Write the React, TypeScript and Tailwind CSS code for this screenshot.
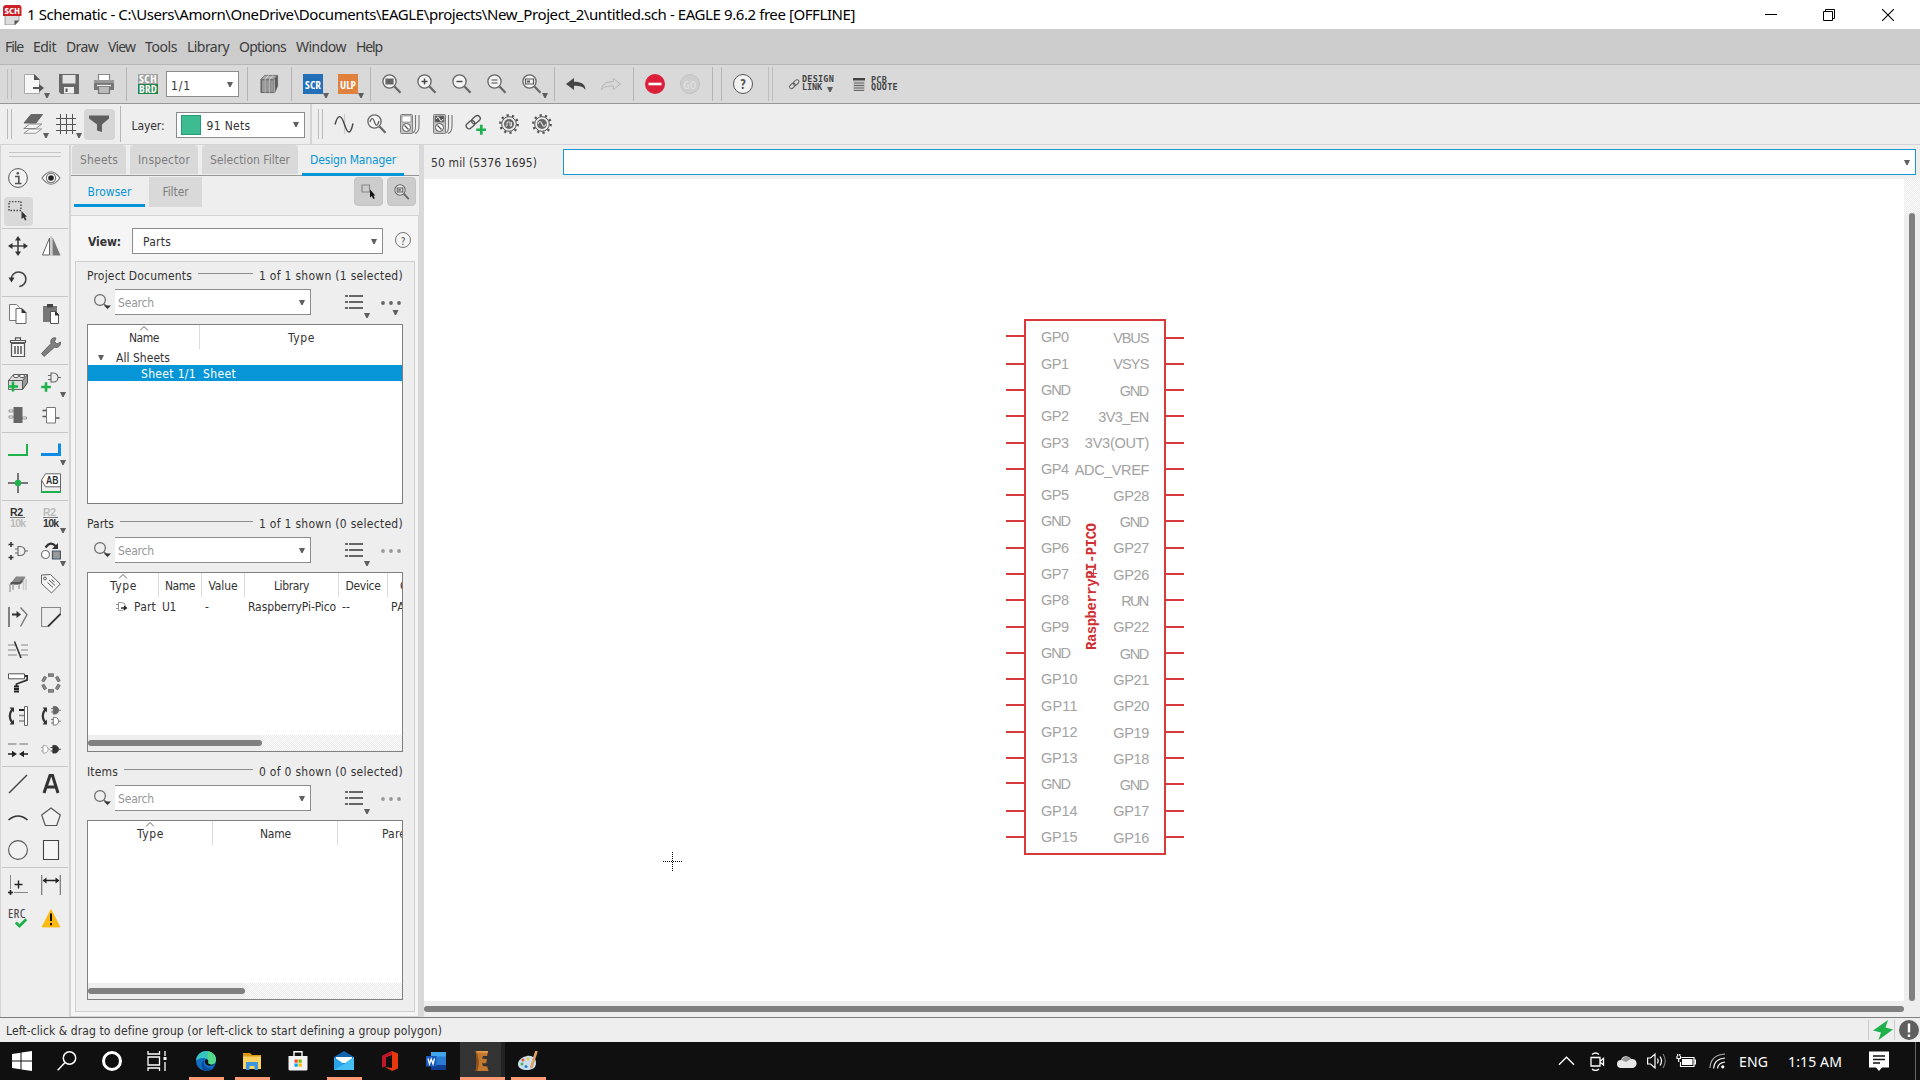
import React, { useLayoutEffect, useRef } from "react";

type Kids = { children?: React.ReactNode };

/* Text run whose tracking is tuned so that it fills a known width. */
function T({ w, className = "", children }: { w: number; className?: string; children: string }) {
  const ref = useRef<HTMLSpanElement>(null);
  useLayoutEffect(() => {
    const el = ref.current;
    if (!el) return;
    el.style.letterSpacing = "0px";
    const natural = el.offsetWidth ? el.getBoundingClientRect().width : w;
    el.style.letterSpacing = `${(w - natural) / children.length}px`;
  }, [w, children]);
  return (
    <span ref={ref} className={`inline-block shrink-0 whitespace-pre ${className}`}>
      {children}
    </span>
  );
}

function I({ children, className = "size-5" }: Kids & { className?: string }) {
  return (
    <svg viewBox="0 0 20 20" className={`shrink-0 ${className}`} fill="none" stroke="#555" strokeWidth="1.2">
      {children}
    </svg>
  );
}

function Tri({ className = "" }: { className?: string }) {
  return (
    <svg viewBox="0 0 6 5" className={`h-[5px] w-1.5 shrink-0 ${className}`}>
      <path d="M0 0h6L3.600 5H2.400z" fill="#5f5f5f" />
    </svg>
  );
}

/* ---------- icon drawings ---------- */
const Lens = ({ children }: Kids) => (
  <I>
    <path d="M12.500 12.500L18.500 18.800" stroke="#666" strokeWidth="2.200" />
    <circle cx="7.500" cy="7.500" r="6.600" fill="#f4f4f4" stroke="#666" strokeWidth="1.300" />
    {children}
  </I>
);
const Plus = ({ x, y, s = 4.5 }: { x: number; y: number; s?: number }) => (
  <path d={`M${x - s} ${y}h${2 * s}M${x} ${y - s}v${2 * s}`} stroke="#1fb14c" strokeWidth="2.600" />
);
const Gate = ({ x = 0, y = 0, fill = "none", c = "#666" }: { x?: number; y?: number; fill?: string; c?: string }) => (
  <g transform={`translate(${x} ${y})`} stroke={c} strokeWidth="1.100">
    <path d="M3 0.500h2c4 0 5 3 5 4.500s-1 4.500-5 4.500H3z" fill={fill} />
    <path d="M0 3h3M0 7h3M10 5h3" />
  </g>
);
const Chain = () => (
  <g stroke="#555" strokeWidth="1.300" transform="rotate(-42 8 8)">
    <rect x="0" y="5" width="9" height="5.400" rx="2.700" />
    <rect x="7" y="5" width="9" height="5.400" rx="2.700" />
  </g>
);
const Gear = ({ children }: Kids) => (
  <I>
    <circle cx="10" cy="10" r="8.700" strokeWidth="2.400" strokeDasharray="2.200 3.266" stroke="#555" />
    <circle cx="10" cy="10" r="7.300" fill="#eee" strokeWidth="1" />
    <circle cx="10" cy="10" r="5" fill="#666" stroke="none" />
    {children}
  </I>
);
const Meter = ({ dark = false }: { dark?: boolean }) => (
  <I>
    <rect x="0.500" y="0.500" width="12" height="19" rx="1" fill="#c4c4c4" stroke="#808080" strokeWidth="1" />
    <rect x="2" y="2" width="9" height="6" fill={dark ? "#555" : "#fff"} stroke="#777" strokeWidth="0.600" />
    {dark && <path d="M3 5q2-4 3.500 0t3.500 0" stroke="#fff" strokeWidth="1" />}
    <circle cx="6.500" cy="13.500" r="4" fill="#fff" stroke="#555" strokeWidth="1" />
    <path d="M4.500 11.500l4 4" />
    <path d="M15.500 1v11q0 6-3 7M19 1v11q0 6-4 7.500" strokeWidth="1.100" stroke="#777" />
  </I>
);

const ic = {
  newDoc: (
    <I>
      <path d="M.5 .5h10l5 5V19.500H.5z" fill="#f6f6f6" stroke="#aaa" strokeWidth="1" />
      <path d="M10 0l6 6h-6z" fill="#555" stroke="none" />
      <path d="M9 14h7" stroke="#555" strokeWidth="2" />
      <path d="M15 10l5 4-5 4z" fill="#555" stroke="none" />
    </I>
  ),
  save: (
    <I>
      <path d="M0 0h20v20H2l-2-2z" fill="#676767" stroke="none" />
      <path d="M3.500 1h13v8.500h-13z" fill="#e4e4e4" stroke="none" />
      <path d="M5 13h10v6.500H5z" fill="#eee" stroke="none" />
      <path d="M6.500 14.500h2v3.500h-2z" fill="#555" stroke="none" />
    </I>
  ),
  print: (
    <I>
      <path d="M4.500 .5h11v7h-11z" fill="#fff" stroke="#888" />
      <path d="M0 6h20v10H0z" fill="#777" stroke="none" />
      <path d="M0 6h20v3H0z" fill="#999" stroke="none" />
      <path d="M4.500 12.500h11v7h-11z" fill="#bbb" stroke="#777" />
      <path d="M3 11.500h14" stroke="#eee" />
    </I>
  ),
  books: (
    <I className="h-5 w-[19px]">
      <path d="M1 5l4-4h13.500v11l-3 7H1z" fill="#5b5b5b" stroke="#666" strokeWidth="1" />
      <path d="M1 5l4-4h13l-3.500 4z" fill="#aaa" stroke="#777" strokeWidth=".6" />
      <path d="M2 6h3v12.500H2zM6.500 6h3v12.500h-3zM11 6h3v12.500h-3z" fill="#999" stroke="none" />
      <path d="M5.500 5v14M10.200 5v14M15 5v14M5.500 5L9 1M10.200 5l3.500-4" stroke="#eee" strokeWidth=".8" />
    </I>
  ),
  zoomFit: <Lens><path d="M4 5h7v5H4z" fill="#666" stroke="#666" /></Lens>,
  zoomIn: <Lens><path d="M4.500 7.500h6M7.500 4.500v6" stroke="#444" strokeWidth="1.400" /></Lens>,
  zoomOut: <Lens><path d="M4.500 7.500h6" stroke="#444" strokeWidth="1.400" /></Lens>,
  zoomRedraw: <Lens><path d="M4.500 6h6M4.500 9h6" stroke="#444" /></Lens>,
  zoomSelect: <Lens><path d="M3.500 5h8v5h-8z" stroke="#555" /><path d="M5 6.500h3v2H5z" fill="#555" stroke="none" /></Lens>,
  undo: (
    <I><path d="M0 10l8-6v3.700c7 0 11.500 2 11.500 8.300-2-3-5-4.300-11.500-4.300V16z" fill="#444" stroke="none" /></I>
  ),
  redo: (
    <I><path d="M19.300 10l-7-5.500v3.200C6 7.700 1 9.500.6 15.500c2.500-3 5.500-3.500 11.700-3.500v3.500z" stroke="#b4b4b4" strokeWidth="1" /></I>
  ),
  stop: (
    <I><circle cx="10" cy="10" r="10" fill="#dc1f3a" stroke="none" /><path d="M3.500 10h13" stroke="#fff" strokeWidth="2.600" /></I>
  ),
  layers: (
    <I>
      <path d="M.8 19.300l6-4.300h12l-6 4.300z" fill="#f5f5f5" stroke="#999" strokeWidth="1" />
      <path d="M.8 14.500l6-4.500h12l-6 4.500z" fill="#f5f5f5" stroke="#888" strokeWidth="1" />
      <path d="M1 9l7-8.500h11.500L13 9z" fill="#666" stroke="#666" strokeWidth="1" />
    </I>
  ),
  grid: <I><path d="M4.500 0v20M10.500 0v20M16.500 0v20M0 4.500h20M0 10.500h20M0 16.500h20" strokeWidth="1" /></I>,
  funnel: <I><path d="M0 1.500h20v3l-7 6V18l-5-1.500v-6l-8-6z" fill="#5f5f5f" stroke="none" /></I>,
  sine: (
    <I><path d="M10.500 0v20" stroke="#ccc" /><path d="M1 10.500C4 0 7 0 10.500 10.500s6 10 8.500-1" strokeWidth="1.400" stroke="#444" /></I>
  ),
  probe: <Lens><path d="M3 8q2.200-7 4.500 0t4.500-1" stroke="#555" /></Lens>,
  chainAdd: <I className="size-[21px]"><Chain /><Plus x={15.500} y={15} s={4.800} /></I>,
  gearPulse: <Gear><path d="M6.500 12H8V8h3v4h1.500V8" stroke="#ddd" strokeWidth="1" /></Gear>,
  gearSine: <Gear><path d="M6 10q2-5 4 0t4 0" stroke="#ddd" strokeWidth="1.200" /></Gear>,

  info: (
    <I>
      <circle cx="10" cy="10" r="9.400" fill="#f2f2f2" stroke="#555" strokeWidth="1" />
      <circle cx="9.800" cy="5.200" r="1.300" fill="#555" stroke="none" />
      <path d="M7 8.500h3.800v6.500M7 15.500h6.500" stroke="#555" strokeWidth="1.700" />
    </I>
  ),
  eye: (
    <I>
      <path d="M1 10q9-12.500 18 0-9 12.500-18 0z" fill="#f8f8f8" stroke="#777" />
      <circle cx="10" cy="10" r="4.600" fill="#fff" stroke="#777" />
      <circle cx="10" cy="10" r="2.800" fill="#222" stroke="none" />
    </I>
  ),
  select: (
    <I>
      <path d="M1 .5h12v9H1z" strokeDasharray="1.500 1.500" strokeWidth="1.400" stroke="#444" />
      <path d="M13.500 10v8l2-1.500 1.500 3 1.500-.8-1.500-3h2z" fill="#333" stroke="none" />
    </I>
  ),
  move: (
    <I>
      <path d="M10 3v14M3 10h14" stroke="#444" strokeWidth="1.600" />
      <path d="M10 0l3 4.500H7zM10 20l3-4.500H7zM0 10l4.500-3v6zM20 10l-4.500-3v6z" fill="#333" stroke="none" />
    </I>
  ),
  mirror: (
    <I>
      <path d="M8.500 2v17H1.500z" fill="#fff" stroke="#666" strokeWidth="1" />
      <path d="M11.500 1v18.500h8z" fill="#777" stroke="none" />
      <path d="M10 0v20" stroke="#999" strokeWidth=".8" />
    </I>
  ),
  rotate: (
    <I>
      <path d="M3.300 10a7.300 7.300 0 1 1 8 7.500" stroke="#444" strokeWidth="1.600" />
      <path d="M.5 8.500h6l-3 5z" fill="#333" stroke="none" />
    </I>
  ),
  copy: (
    <I>
      <path d="M1.500 .5h7l3 3v13h-10z" fill="#fafafa" stroke="#777" strokeWidth="1" />
      <path d="M8 4.500h6l4 4V19.500H8z" fill="#fff" stroke="#666" strokeWidth="1" />
      <path d="M13.500 4l5 5h-5z" fill="#333" stroke="none" />
    </I>
  ),
  paste: (
    <I>
      <path d="M2 2h14v16H2z" fill="#777" stroke="none" />
      <path d="M6 0h6v3.500H6z" fill="#444" stroke="none" />
      <path d="M9.500 7.500h5l3 3v9h-8z" fill="#fff" stroke="#555" strokeWidth="1" />
      <path d="M14 7l4.500 4.500H14z" fill="#333" stroke="none" />
    </I>
  ),
  trash: (
    <I>
      <path d="M3.500 6.500h13v13h-13z" fill="#f5f5f5" stroke="#555" />
      <path d="M2.500 3.500h15v2h-15zM7.500 3V.8h5V3" stroke="#555" />
      <path d="M7 9v8M10 9v8M13 9v8" stroke="#555" strokeWidth="1.500" />
    </I>
  ),
  wrench: (
    <I><path d="M19.500 5l-3.500 2-2.500-2.500L15 1C11 0 9 3 10 6.500l-9.500 10L3 19.500l10.500-9.300c3.500 1 6.500-1.200 6-5.200z" fill="#808080" stroke="#555" strokeWidth=".8" /></I>
  ),
  addPart: (
    <I>
      <path d="M.5 8.500l5-6h14v8l-5 7H.5z" fill="#ddd" stroke="#666" strokeWidth="1" />
      <path d="M14.500 8.500l5-6v8l-5 7z" fill="#999" stroke="#555" strokeWidth="1" />
      <ellipse cx="8" cy="4" rx="2.600" ry="1.600" fill="#fff" strokeWidth="1" />
      <ellipse cx="14" cy="4" rx="2.600" ry="1.600" fill="#fff" strokeWidth="1" />
      <path d="M0 8.500h14.500" strokeWidth="1" />
      <Plus x={5} y={14.500} s={5} />
    </I>
  ),
  addGate: <I><Gate x={7} y={0.5} /><Plus x={5} y={15} s={4.800} /></I>,
  chipDark: (
    <I>
      <path d="M1 5h4v2H1zM1 11h4v2H1zM14.500 12h4v2h-4z" fill="#fff" stroke="#888" strokeWidth=".9" />
      <path d="M5.500 2h9v16h-9z" fill="#666" stroke="none" />
    </I>
  ),
  chipLight: (
    <I>
      <path d="M1.500 5.500h4M1.500 11.500h4M14.500 13h4" stroke="#555" strokeWidth="1.600" />
      <path d="M5.500 2.500h9v15.500h-9z" fill="#fff" stroke="#777" strokeWidth="1" />
    </I>
  ),
  net: <I><path d="M0 15h19V4" stroke="#1fb14c" strokeWidth="2" /></I>,
  bus: <I><path d="M0 14.500h18.500V3.500" stroke="#0d8ce8" strokeWidth="3" /></I>,
  junction: (
    <I><path d="M10 0v20M0 10h20" stroke="#777" strokeWidth="2" /><circle cx="10" cy="10" r="3.200" fill="#1fb14c" stroke="none" /></I>
  ),
  addLabelGate: (
    <I><Gate x={7} y={5} /><path d="M.5 3.500h5M3 1v5M.5 16.500h5M3 14v5" stroke="#333" strokeWidth="1.500" /></I>
  ),
  replace: (
    <I>
      <circle cx="4.500" cy="13.500" r="4" fill="#fff" stroke="#777" />
      <path d="M11.500 10h8v8h-8z" fill="#999" stroke="#456" />
      <path d="M4.500 6.500q5-7 10-1.500" stroke="#333" strokeWidth="2.200" />
      <path d="M17 2v6h-6z" fill="#333" stroke="none" />
    </I>
  ),
  gateSwap: (
    <I>
      <path d="M1.500 10.500L8 2.500h9.500l-2.500 5.500-3 2.500z" fill="#888" stroke="none" />
      <path d="M2 10.500h9.500l3.500-3V5l-3.500 3H3z" fill="#555" stroke="none" />
      <path d="M2 10v8M5 10v6M11 10v5" stroke="#aaa" strokeWidth="1.600" />
      <path d="M15.500 6v10M18 5v11" stroke="#ccc" strokeWidth="1.500" />
    </I>
  ),
  tag: (
    <I>
      <path d="M.5 1l9-.5 9.800 9.500-8.800 9L.5 9.500z" fill="#f6f6f6" stroke="#666" strokeWidth="1" />
      <circle cx="4" cy="4.500" r="1.400" strokeWidth="1" />
      <path d="M8 6l6 5.500M6.500 8.500l5.500 5M10.500 5.500l3 2.700" strokeWidth="1" />
    </I>
  ),
  smash: (
    <I>
      <path d="M1 0v20" stroke="#666" strokeWidth="1.600" />
      <path d="M4 7.500h6" stroke="#333" strokeWidth="2" /><path d="M8.500 4l4.500 3.500L8.500 11z" fill="#333" stroke="none" />
      <path d="M12.500 .5l6.500 7-6.500 12" stroke="#777" strokeWidth="1.400" />
    </I>
  ),
  miter: (
    <I><path d="M7 19.500H.5V.5h19V7" stroke="#888" strokeWidth="1.200" /><path d="M7 19.500L19.500 7" stroke="#333" strokeWidth="1.800" /></I>
  ),
  split: (
    <I><path d="M0 5h8M0 10h8M0 15h9M13 5h7M13 10h7M13 15h7" stroke="#aaa" strokeWidth="1.400" /><path d="M6.500 1.500l6.500 16.500" stroke="#333" strokeWidth="1.600" /></I>
  ),
  roller: (
    <I>
      <path d="M.5 .8h16v5H.5z" fill="#fff" stroke="#555" strokeWidth="1" />
      <path d="M17 3h2.500l-.5 4-10.500 4v2" stroke="#333" strokeWidth="1.800" />
      <path d="M6 13.500h5M6 16h5M6 18.500h5" stroke="#222" strokeWidth="1.900" />
    </I>
  ),
  optimize: (
    <I>
      {[0, 60, 120, 180, 240, 300].map((a) => (
        <rect key={a} x="7.500" y=".8" width="5" height="2.600" fill="#888" stroke="#666" strokeWidth=".8" transform={`rotate(${a} 10 10)`} />
      ))}
    </I>
  ),
  pinSwap: (
    <I>
      <path d="M4.500 3q-5.500 7 0 14" stroke="#333" strokeWidth="2.200" /><path d="M1.500 1.500h4.500v5zM1.500 18.500h4.500v-5z" fill="#333" stroke="none" />
      <path d="M16.500 .5h3v19h-3z" fill="#fff" stroke="#666" strokeWidth="1" />
      <path d="M11 4h5" stroke="#222" strokeWidth="2" /><path d="M11 9.500h5M11 15h5" stroke="#888" strokeWidth="1.400" />
    </I>
  ),
  gateSwap2: (
    <I>
      <path d="M4.500 3q-5.500 7 0 14" stroke="#333" strokeWidth="2.200" /><path d="M1.500 1.500h4.500v5zM1.500 18.500h4.500v-5z" fill="#333" stroke="none" />
      <g transform="translate(10 0) scale(.76 .85)"><Gate fill="#666" /></g>
      <g transform="translate(10 11) scale(.76 .85)"><Gate fill="#fff" /></g>
    </I>
  ),
  pinch: (
    <I>
      <path d="M0 5h8.500M11.500 5H20" stroke="#999" strokeWidth="1.600" />
      <path d="M0 15h5M15 15h5" stroke="#222" strokeWidth="1.600" /><path d="M4 11.800l5 3.200-5 3.200zM16 11.800l-5 3.200 5 3.200z" fill="#222" stroke="none" />
    </I>
  ),
  invoke: (
    <I>
      <g transform="translate(0 6) scale(.7 .85)"><Gate fill="#fff" c="#999" /></g>
      <g transform="translate(9.500 6) scale(.8 .85)"><Gate fill="#333" c="#333" /></g>
    </I>
  ),
  line: <I><path d="M1 19L19 1" stroke="#444" strokeWidth="1.400" /></I>,
  textA: <I><path d="M3 19L9 1.500h2.500L17 19M5.500 13h9" stroke="#333" strokeWidth="3" /></I>,
  arc: <I><path d="M.5 13q9.500-8 19 0" stroke="#333" strokeWidth="1.600" /></I>,
  polygon: <I><path d="M10 1l9.300 7-3.600 10.500H4.300L.7 8z" fill="#f2f2f2" stroke="#555" /></I>,
  circle: <I><circle cx="10" cy="10" r="9.400" fill="#f2f2f2" stroke="#555" strokeWidth="1.100" /></I>,
  rect: <I><path d="M2.500 .5h15v19h-15z" fill="#f6f6f6" stroke="#444" strokeWidth="1.100" /></I>,
  mark: (
    <I>
      <path d="M2.500 0v14M6 17.500h14" stroke="#888" strokeWidth="1" />
      <path d="M6.500 9.500h8M10.500 5.500v8" stroke="#222" strokeWidth="1.400" /><path d="M0 17.500h5M2.500 15v5" stroke="#222" strokeWidth="1.600" />
    </I>
  ),
  dimension: (
    <I>
      <path d="M.7 0v20M19.300 0v20" stroke="#777" strokeWidth="1.200" /><path d="M4 5.500h12" stroke="#222" strokeWidth="1.500" />
      <path d="M1.500 5.500l4-3v6zM18.500 5.500l-4-3v6z" fill="#222" stroke="none" />
    </I>
  ),
  warn: (
    <I>
      <path d="M10 1.500L19 19H1z" fill="#fdb913" stroke="#fdb913" strokeWidth=".8" strokeLinejoin="round" />
      <path d="M10 5.500v7.500M10 15v2.200" stroke="#111" strokeWidth="2" />
    </I>
  ),
};

/* ---------- toolbar pieces ---------- */
const Sep = () => (
  <div className="flex h-full w-[9px] shrink-0 justify-center py-0.5"><div className="w-px bg-[#b5b5b5]" /></div>
);
const Grip = ({ className = "" }: { className?: string }) => (
  <div className={`flex shrink-0 gap-[3px] self-center ${className}`}>
    <div className="w-px bg-[#bdbdbd]" /><div className="w-px bg-[#bdbdbd]" />
  </div>
);
const Slot = ({ children, arrow }: Kids & { arrow?: boolean }) => (
  <div className="relative flex h-full w-[35px] shrink-0 items-center justify-center">
    {children}
    {arrow && <Tri className="absolute top-7 right-[1.500px]" />}
  </div>
);
const Slot2 = ({ children, arrow }: Kids & { arrow?: boolean }) => (
  <div className="relative flex h-full w-[33px] shrink-0 items-center justify-center">
    {children}
    {arrow && <Tri className="absolute top-[29px] right-[.500px]" />}
  </div>
);

function MainToolbar() {
  return (
    <div className="flex h-[39px] shrink-0 items-center border-b border-[#969696] bg-[#d9d9d9]">
      <Grip className="ml-[7px] h-[30px]" />
      <div className="ml-[4.500px] flex h-full items-center">
        <Slot arrow>{ic.newDoc}</Slot><Slot>{ic.save}</Slot><Slot>{ic.print}</Slot>
        <Sep />
        <Slot>
          <div className="flex size-5 flex-col font-['Open_Sans'] text-[11px] leading-[10px] font-bold text-white">
            <div className="flex h-2.5 justify-center bg-[#a3a3a3]"><T w={18}>SCH</T></div>
            <div className="flex h-2.5 justify-center bg-[#23874a]"><T w={18}>BRD</T></div>
          </div>
        </Slot>
        <div className="flex w-[77px] pl-[.500px]">
          <div className="flex h-[26px] w-[73px] items-center justify-between border border-[#8c8c8c] bg-white pr-[5px] pl-1">
            <T w={20} className="pt-[3px] text-[12px]">1/1</T><Tri />
          </div>
        </div>
        <Sep /><Slot>{ic.books}</Slot><Sep />
        <Slot arrow><div className="grid size-5 place-items-center bg-[#2470b8]"><T w={16} className="font-['Open_Sans'] text-[11px] leading-none font-bold text-white">SCR</T></div></Slot>
        <Slot arrow><div className="grid size-5 place-items-center bg-[#e0813d]"><T w={16} className="font-['Open_Sans'] text-[11px] leading-none font-bold text-white">ULP</T></div></Slot>
        <Sep />
        <Slot>{ic.zoomFit}</Slot><Slot>{ic.zoomIn}</Slot><Slot>{ic.zoomOut}</Slot><Slot>{ic.zoomRedraw}</Slot><Slot arrow>{ic.zoomSelect}</Slot>
        <Sep /><Slot>{ic.undo}</Slot><Slot>{ic.redo}</Slot><Sep />
        <Slot>{ic.stop}</Slot>
        <Slot><div className="grid size-5 place-items-center rounded-full border border-[#c3c3c3] bg-[#cecece]"><T w={13} className="font-['Open_Sans'] text-[11px] leading-none text-[#e6e6e6]">GO</T></div></Slot>
        <Sep /><Sep />
        <Slot><div className="grid size-5 place-items-center rounded-full border border-[#555] bg-[#f2f2f2] font-['Open_Sans'] text-[14px] leading-none font-bold text-[#555]">?</div></Slot>
        <Grip className="ml-[7.500px] h-[34px]" />
        <svg viewBox="0 0 20 20" className="mr-px ml-[15px] size-[13px]" fill="none"><g transform="translate(1 1) scale(1.100)"><Chain /></g></svg>
        <div className="flex w-[50px] flex-col items-start font-['DejaVu_Sans_Mono'] text-[8.500px] leading-[7.500px] font-bold text-[#444]">
          <T w={32}>DESIGN</T>
          <div className="flex items-center gap-[5px]"><T w={20}>LINK</T><Tri className="mt-1" /></div>
        </div>
        <svg viewBox="0 0 12 13" className="ml-px h-[13px] w-3"><path d="M0 0h12v2.500H0z" fill="#444" /><path d="M0 3h12v10H0z" fill="#c4c4c4" /><path d="M1 5h10M1 7.500h10M1 10h10M1 12.500h10" stroke="#666" /></svg>
        <div className="ml-1.5 flex flex-col items-start font-['DejaVu_Sans_Mono'] text-[8.500px] leading-[7.500px] font-bold text-[#444]">
          <T w={16}>PCB</T><T w={27}>QUOTE</T>
        </div>
      </div>
    </div>
  );
}

function LayerToolbar() {
  return (
    <div className="flex h-[41px] shrink-0 items-center border-b border-[#d4d4d4] bg-[#eee]">
      <Grip className="ml-[7px] h-[30px]" />
      <div className="ml-[4.500px] flex h-full items-center">
        <Slot2 arrow>{ic.layers}</Slot2><Slot2 arrow>{ic.grid}</Slot2>
        <Slot2><div className="grid h-[31px] w-[31px] place-items-center rounded-sm bg-[#d6d6d6]">{ic.funnel}</div></Slot2>
        <Sep />
        <T w={33} className="ml-[7px] pt-[3px] text-[12px]">Layer:</T>
        <div className="mt-px ml-[11px] flex h-[26px] w-[129px] items-center border border-[#8c8c8c] bg-white pr-[5px] pl-1">
          <div className="size-5 border border-[#279b75] bg-[#3dbc91]" />
          <T w={44} className="ml-1.5 pt-0.5 text-[12px]">91 Nets</T>
          <Tri className="ml-auto" />
        </div>
        <div className="ml-[5px] h-full w-0.5 bg-[#d4d4d4]" />
        <Grip className="ml-1.5 h-[30px]" />
        <div className="ml-[4.500px] flex h-full items-center">
          <Slot2>{ic.sine}</Slot2><Slot2>{ic.probe}</Slot2><Slot2><Meter /></Slot2><Slot2><Meter dark /></Slot2>
          <Slot2>{ic.chainAdd}</Slot2><Slot2>{ic.gearPulse}</Slot2><Slot2>{ic.gearSine}</Slot2>
        </div>
      </div>
    </div>
  );
}

/* ---------- tool palette ---------- */
const Cell = ({ children, arrow }: Kids & { arrow?: boolean }) => (
  <div className="relative flex h-[33px] w-[33px] shrink-0 items-center justify-center">
    {children}
    {arrow && <Tri className="absolute right-[1.500px] bottom-0.5" />}
  </div>
);
const Row = ({ children }: Kids) => <div className="flex h-[33px] pl-[.500px]">{children}</div>;
const HSep = () => <div className="mx-px mb-px h-px bg-[#c6c6c6]" />;
const R2 = ({ top, bottom }: { top: string; bottom: string }) => (
  <div className="flex w-5 flex-col items-start pl-0.5 font-['Liberation_Sans'] text-[10.500px] leading-[9px] font-bold">
    <T w={13} className={top}>R2</T>
    <div className="h-px w-[15px] bg-[#777]" />
    <T w={15.500} className={`pt-px ${bottom}`}>10k</T>
  </div>
);

function Palette() {
  return (
    <div className="flex w-[71px] shrink-0 flex-col border-r-2 border-l border-[#d4d4d4] bg-[#eee]">
      <div className="mx-2 mt-[7px] mb-[4.500px] flex flex-col gap-[3px]"><div className="h-px bg-[#c6c6c6]" /><div className="h-px bg-[#c6c6c6]" /></div>
      <Row><Cell>{ic.info}</Cell><Cell>{ic.eye}</Cell></Row>
      <Row><Cell><div className="grid size-[29px] place-items-center rounded-sm bg-[#d9d9d9]">{ic.select}</div></Cell></Row>
      <HSep />
      <Row><Cell>{ic.move}</Cell><Cell>{ic.mirror}</Cell></Row>
      <Row><Cell>{ic.rotate}</Cell></Row>
      <HSep />
      <Row><Cell>{ic.copy}</Cell><Cell>{ic.paste}</Cell></Row>
      <Row><Cell>{ic.trash}</Cell><Cell>{ic.wrench}</Cell></Row>
      <HSep />
      <Row><Cell>{ic.addPart}</Cell><Cell arrow>{ic.addGate}</Cell></Row>
      <Row><Cell>{ic.chipDark}</Cell><Cell>{ic.chipLight}</Cell></Row>
      <HSep />
      <Row><Cell>{ic.net}</Cell><Cell arrow>{ic.bus}</Cell></Row>
      <Row>
        <Cell>{ic.junction}</Cell>
        <Cell>
          <svg viewBox="0 0 20 20" className="size-5" fill="none">
            <path d="M4.500 .8h15v13h-15L.5 7z" fill="#fff" stroke="#666" />
            <path d="M.5 7v12M19.500 13v6" stroke="#666" />
            <path d="M0 19h20" stroke="#1fb14c" strokeWidth="2" />
            <text x="5" y="11" fontFamily="Liberation Sans" fontSize="10" fontWeight="700" fill="#333" textLength="12.500" lengthAdjust="spacingAndGlyphs">AB</text>
          </svg>
        </Cell>
      </Row>
      <HSep />
      <Row><Cell><R2 top="text-[#333]" bottom="text-[#bbb]" /></Cell><Cell arrow><R2 top="text-[#bbb]" bottom="text-[#333]" /></Cell></Row>
      <Row><Cell>{ic.addLabelGate}</Cell><Cell arrow>{ic.replace}</Cell></Row>
      <Row><Cell>{ic.gateSwap}</Cell><Cell>{ic.tag}</Cell></Row>
      <Row><Cell>{ic.smash}</Cell><Cell>{ic.miter}</Cell></Row>
      <Row><Cell>{ic.split}</Cell></Row>
      <Row><Cell>{ic.roller}</Cell><Cell>{ic.optimize}</Cell></Row>
      <Row><Cell>{ic.pinSwap}</Cell><Cell>{ic.gateSwap2}</Cell></Row>
      <Row><Cell>{ic.pinch}</Cell><Cell>{ic.invoke}</Cell></Row>
      <HSep />
      <Row><Cell>{ic.line}</Cell><Cell>{ic.textA}</Cell></Row>
      <Row><Cell>{ic.arc}</Cell><Cell>{ic.polygon}</Cell></Row>
      <Row><Cell>{ic.circle}</Cell><Cell>{ic.rect}</Cell></Row>
      <HSep />
      <Row><Cell>{ic.mark}</Cell><Cell>{ic.dimension}</Cell></Row>
      <Row>
        <Cell>
          <div className="flex size-5 flex-col items-start">
            <T w={18} className="font-['Open_Sans'] text-[13px] leading-[10px] text-[#444]">ERC</T>
            <svg viewBox="0 0 12 10" className="ml-[7px] h-2.5 w-3" fill="none"><path d="M.8 4.500L4.500 8 11.300 1.200" stroke="#1fb14c" strokeWidth="2.800" /></svg>
          </div>
        </Cell>
        <Cell>{ic.warn}</Cell>
      </Row>
    </div>
  );
}

/* ---------- design manager ---------- */
const hatch =
  "bg-[conic-gradient(#fff_25%,#e9e9e9_0_50%,#fff_0_75%,#e9e9e9_0)] bg-[length:2px_2px]";

function GroupSection({ title, titleW, count, menu, children }: Kids & { title: string; titleW: number; count: string; menu?: boolean }) {
  return (
    <div className="flex h-[248px] shrink-0 flex-col pr-[11px] pl-[11px]">
      <div className="flex h-[25px] items-center gap-1.5">
        <T w={titleW} className="pt-0.5 text-[12px]">{title}</T>
        <div className="mb-[3px] h-px flex-1 bg-[#8c8c8c]" />
        <T w={144} className="pt-0.5 text-[12px]">{count}</T>
      </div>
      <div className="mt-0.5 flex h-[26px] items-center">
        <svg viewBox="0 0 17 16" className="ml-[7px] h-4 w-[17px]" fill="none">
          <circle cx="6" cy="6" r="5.400" stroke="#666" strokeWidth="1.200" /><path d="M10 10l3 3" stroke="#666" strokeWidth="1.600" /><path d="M10 11.500h7l-3.500 3.500z" fill="#333" />
        </svg>
        <div className="ml-1 flex h-[26px] w-[196px] items-center justify-between border border-l-0 border-[#8c8c8c] bg-white pr-[5px] pl-[3px]">
          <T w={36} className="pt-px text-[12px] text-[#969696]">Search</T><Tri />
        </div>
        <svg viewBox="0 0 26 24" className="ml-[34px] h-6 w-[26px] overflow-visible">
          <path d="M0 6h3M4 6h14M0 12h3M4 12h14M0 18h3M4 18h14" stroke="#666" strokeWidth="2.200" />
          <path d="M19 23h6l-2.400 5h-1.200z" fill="#5f5f5f" />
        </svg>
        <svg viewBox="0 0 20 16" className="ml-2.5 h-4 w-5 overflow-visible">
          <g fill={menu ? "#666" : "#999"}><circle cx="2" cy="9" r="1.900" /><circle cx="10" cy="9" r="1.900" /><circle cx="18" cy="9" r="1.900" /></g>
          {menu && <path d="M11.500 16h6l-2.400 5h-1.200z" fill="#5f5f5f" />}
        </svg>
      </div>
      <div className="mt-[9px] flex h-[180px] flex-col overflow-hidden border border-[#7f7f7f] bg-white text-[12px] leading-none">{children}</div>
    </div>
  );
}
const HCell = ({ children, className, sort, w }: { children: string; className: string; sort?: boolean; w: number }) => (
  <div className={`relative flex h-6 shrink-0 items-center justify-center border-r border-[#dcdcdc] pl-px ${className}`}>
    {sort && <svg viewBox="0 0 9 5" className="absolute top-px left-1/2 h-[5px] w-[9px] -translate-x-1/2" fill="none"><path d="M.5 4.500l4-4 4 4" stroke="#666" /></svg>}
    <T w={w} className="mt-0.5">{children}</T>
  </div>
);
const HScroll = ({ thumb, lit }: { thumb: string; lit: string }) => (
  <div className={`mt-auto flex h-4 shrink-0 ${hatch}`}>
    <div className={`flex items-center bg-[#eee] ${lit}`}><div className={`h-1.5 rounded-full bg-[#808080] ${thumb}`} /></div>
  </div>
);
const Tab = ({ children, w, className }: { children: string; w: number; className: string }) => (
  <div className={`flex h-[29px] items-center justify-center rounded-t-sm bg-[#d9d9d9] text-[12px] text-[#7d7d7d] ${className}`}><T w={w}>{children}</T></div>
);

function DesignManager() {
  return (
    <div className="flex w-[353px] shrink-0 flex-col border-r-[5px] border-[#d9d9d9] bg-[#eee]">
      <div className="flex h-[31px] gap-1 border-b border-[#969696] pl-px">
        <Tab w={38} className="w-[54px]">Sheets</Tab>
        <Tab w={52} className="w-[68px]">Inspector</Tab>
        <Tab w={80} className="w-24">Selection Filter</Tab>
        <div className="flex h-[31px] w-[102px] items-center justify-center border-b-[3px] border-[#0696d7] pt-0.5 text-[12px] text-[#0696d7]"><T w={86}>Design Manager</T></div>
      </div>
      <div className="flex h-[39px] pt-px pl-[3px]">
        <div className="flex h-[30px] w-[71px] items-center justify-center border-b-[3px] border-[#0696d7] pt-0.5 text-[12px] text-[#0696d7]"><T w={44}>Browser</T></div>
        <div className="ml-1 flex h-[30px] w-[53px] items-center justify-center bg-[#d9d9d9] text-[12px] text-[#7d7d7d]"><T w={26}>Filter</T></div>
        <div className="ml-auto grid size-[29px] place-items-center rounded-sm border border-[#c4c4c4] bg-[#ccc]">
          <svg viewBox="0 0 16 16" className="size-4" fill="none"><path d="M1 1h7.500v7H1z" stroke="#888" strokeWidth="1.200" /><path d="M9 5.500v8l1.800-1.500 1.500 3 1.500-.8-1.500-2.700h2z" fill="#111" /></svg>
        </div>
        <div className="mr-[3px] ml-1 grid size-[29px] place-items-center rounded-sm border border-[#c4c4c4] bg-[#ccc]">
          <svg viewBox="0 0 20 20" className="size-4" fill="none"><path d="M12 12l6.500 6.800" stroke="#666" strokeWidth="2.200" /><circle cx="7.500" cy="7.500" r="6.500" fill="#e8e8e8" stroke="#666" strokeWidth="1.300" /><path d="M4 5h7v5H4z" stroke="#555" strokeWidth="1.300" /><path d="M5.500 6.500h3v2h-3z" fill="#555" /></svg>
        </div>
      </div>
      <div className="flex flex-1 flex-col border border-l-0 border-[#d4d4d4] bg-[#f5f5f5]">
        <div className="mt-3 flex h-[26px] items-center pl-[17px]">
          <T w={33} className="pt-0.5 text-[12px] font-bold">View:</T>
          <div className="ml-[11px] flex h-[26px] w-[251px] items-center justify-between border border-[#8c8c8c] bg-white pr-[5px] pl-2.5"><T w={28} className="pt-0.5 text-[12px]">Parts</T><Tri /></div>
          <div className="mb-0.5 ml-3 grid size-4 place-items-center rounded-full border border-[#777] font-['Open_Sans'] text-[11px] leading-none font-semibold text-[#666]">?</div>
        </div>
        <div className="mt-[7px] mr-[3px] ml-1 flex h-[751px] flex-col border border-[#d0d0d0] bg-[#eee]">
          <GroupSection title="Project Documents" titleW={105} count="1 of 1 shown (1 selected)" menu>
            <div className="flex"><HCell w={30} sort className="w-28">Name</HCell><HCell w={27} className="w-[203px]">Type</HCell></div>
            <div className="flex h-4 items-center gap-3 pl-2.5"><Tri /><T w={54} className="pt-0.5">All Sheets</T></div>
            <div className="flex h-4 items-center gap-[7px] bg-[#0696d7] pl-[53px] text-white"><T w={55} className="pt-0.5">Sheet 1/1</T><T w={33} className="pt-0.5">Sheet</T></div>
          </GroupSection>
          <GroupSection title="Parts" titleW={27} count="1 of 1 shown (0 selected)">
            <div className="flex">
              <HCell w={27} sort className="w-[71px]">Type</HCell><HCell w={30} className="w-[43px] pr-px">Name</HCell><HCell w={29} className="w-[43px] pr-px">Value</HCell>
              <HCell w={35} className="w-[94px] pr-px">Library</HCell><HCell w={35} className="w-[49px] pr-px">Device</HCell>
              <div className="flex h-6 items-center pl-3"><T w={7} className="mt-0.5">C</T></div>
            </div>
            <div className="flex h-5 items-center">
              <svg viewBox="0 0 12 10" className="ml-7 h-2.5 w-3 shrink-0" fill="none"><path d="M2.500 .5h3q4 0 4 4t-4 4h-3zM0 2.500h2.500M0 6.500h2.500" stroke="#888" strokeWidth=".9" /><path d="M5 6h4" stroke="#222" strokeWidth="1.400" /><path d="M8 3.500l3.500 2.500L8 8.500z" fill="#222" /></svg>
              <T w={22} className="ml-[6px]">Part</T><T w={14} className="ml-[6px]">U1</T><T w={4} className="ml-[29px]">-</T>
              <T w={88} className="ml-[39px]">RaspberryPi-Pico</T><T w={8} className="ml-[6px]">--</T><T w={14} className="ml-[41px]">PA</T>
            </div>
            <HScroll lit="w-[174px]" thumb="w-[174px]" />
          </GroupSection>
          <GroupSection title="Items" titleW={31} count="0 of 0 shown (0 selected)">
            <div className="flex"><HCell w={27} sort className="w-[125px]">Type</HCell><HCell w={31} className="w-[125px]">Name</HCell><div className="flex h-6 items-center pl-11"><T w={24} className="mt-0.5">Pare</T></div></div>
            <HScroll lit="w-[157px]" thumb="w-[157px]" />
          </GroupSection>
        </div>
      </div>
    </div>
  );
}

/* ---------- schematic canvas ---------- */
const leftPins: [string, number][] = [
  ["GP0", 336], ["GP1", 364], ["GND", 390], ["GP2", 416], ["GP3", 443], ["GP4", 469], ["GP5", 495], ["GND", 521], ["GP6", 548], ["GP7", 574],
  ["GP8", 600], ["GP9", 627], ["GND", 653], ["GP10", 679], ["GP11", 705], ["GP12", 732], ["GP13", 758], ["GND", 783], ["GP14", 811], ["GP15", 837],
];
const rightPins: [string, number, number][] = [
  ["VBUS", 338, 36], ["VSYS", 364, 36], ["GND", 390, 29.500], ["3V3_EN", 416, 51], ["3V3(OUT)", 443, 64.500], ["ADC_VREF", 469, 74.500], ["GP28", 495, 36],
  ["GND", 521, 29.500], ["GP27", 548, 36], ["GP26", 574, 36], ["RUN", 600, 28], ["GP22", 627, 36], ["GND", 653, 29.500], ["GP21", 679, 36],
  ["GP20", 705, 36], ["GP19", 732, 36], ["GP18", 758, 36], ["GND", 784, 29.500], ["GP17", 811, 36], ["GP16", 837, 36],
];

function Schematic() {
  return (
    <svg viewBox="424 179 1480 822" className="h-[822px] w-[1480px] shrink-0 bg-white" fontFamily="Liberation Sans" fontSize="14.500" fill="#a2a2a2">
      <path d="M1025 320h140v534h-140z" fill="none" stroke="#d63a3c" strokeWidth="2" />
      {leftPins.map(([name, y], i) => (
        <g key={i}>
          <path d={`M1006 ${y}h18`} stroke="#d63a3c" strokeWidth="2" />
          <text x="1041" y={342.300 + i * 26.300} textLength={name === "GND" ? 30 : name.length === 4 ? 36.500 : 28}>{name}</text>
        </g>
      ))}
      {rightPins.map(([name, y, w], i) => (
        <g key={i}>
          <path d={`M1166 ${y}h18`} stroke="#d63a3c" strokeWidth="2" />
          <text x={1149.300 - w} y={343 + i * 26.300} textLength={w}>{name}</text>
        </g>
      ))}
      <text transform="translate(1095.500 650) rotate(-90)" fontFamily="Liberation Mono" fontWeight="700" fontSize="14" fill="#d02f32" textLength="127">RaspberryPI-PICO</text>
      <path d="M1089 573.500h8M1093.500 569v8" stroke="#d63a3c" />
      <path d="M663 861.500h20M672.500 852v20" stroke="#000" strokeDasharray="1 1" />
    </svg>
  );
}

function Workspace() {
  return (
    <div className="flex min-w-0 flex-1 flex-col bg-[#eee]">
      <div className="flex h-[34px] items-center pl-[7px]">
        <T w={106} className="pt-0.5 text-[12px]">50 mil (5376 1695)</T>
        <div className="ml-[26px] flex h-[26px] w-[1353px] items-center justify-end border border-[#1a96d4] bg-white pr-[5px]"><Tri /></div>
      </div>
      <div className="flex">
        <Schematic />
        <div className={`flex w-4 flex-col ${hatch}`}>
          <div className="mt-[34px] flex flex-1 justify-center bg-[#eee]"><div className="w-1.5 rounded-full bg-[#808080]" /></div>
        </div>
      </div>
      <div className="flex h-4 items-center"><div className="h-1.5 w-[1480px] rounded-full bg-[#808080]" /></div>
    </div>
  );
}

/* ---------- windows chrome ---------- */
const TaskItem = ({ x, children, line }: Kids & { x: string; line?: string }) => (
  <div className={`relative flex h-full shrink-0 items-center justify-center ${x}`}>
    {children}
    {line && <div className={`absolute bottom-0 h-[3px] bg-[#ff9a75] ${line}`} />}
  </div>
);

function Taskbar() {
  return (
    <div className="flex h-[38px] shrink-0 items-center bg-[#101010] font-['Noto_Sans'] text-white">
      <TaskItem x="w-11"><svg viewBox="0 0 20 20" className="size-5"><path d="M0 3l8.500-1.200v7.700H0zM9.500 1.600L20 0v9.500H9.500zM0 10.500h8.500v7.700L0 17zM9.500 10.500H20V20L9.500 18.500z" fill="#fff" /></svg></TaskItem>
      <TaskItem x="w-[46px]"><svg viewBox="0 0 20 20" className="size-5" fill="none" stroke="#fff" strokeWidth="1.500"><circle cx="12.500" cy="7" r="6.200" /><path d="M8 11.500L.7 19.300" /></svg></TaskItem>
      <TaskItem x="w-11"><div className="size-5 rounded-full border-[3px] border-white" /></TaskItem>
      <TaskItem x="w-[46px]"><svg viewBox="0 0 20 20" className="size-5" fill="none" stroke="#fff" strokeWidth="1.300"><path d="M1 0v3h11.500V0M1 20v-3h11.500v3M1 6h11.500v8H1zM18 0v5M18 11v9" /><path d="M16.500 6h3v3h-3z" fill="#fff" stroke="none" /></svg></TaskItem>
      <TaskItem x="w-[53px]" line="left-[9px] w-[35px]">
        <svg viewBox="0 0 20 20" className="mr-px size-5">
          <circle cx="10" cy="10" r="10" fill="#0f6fc5" />
          <path d="M0 9.500C.5 4 5 0 10 0c6 0 10 4 10 8.500 0 3-2.500 5-5.500 5-2 0-3-.8-2.500-1.800C13 9.500 10.500 7 7 7 4 7 1 8.500 0 9.500z" fill="#38c5c0" />
          <path d="M12 .2c5 .7 8 4.500 8 8.300 0 3-2.500 5-5.500 5-2 0-3-.8-2.500-1.800 1-2-1-5 0-11.500z" fill="#54d98a" />
          <path d="M8.500 9c-2 3 0 8 5 8.500 2 .2 4-.6 5.200-1.500-2 3-5 4-8.700 4C5 20 4 11 8.500 9z" fill="#0b4a9b" />
          <path d="M12.200 11c.5-1.200-.5-2.600-2-3-2 1.300-1.700 5.500 2 6.500 3 .8 6-.3 7-1.500-1 .6-3 1-4.700.5-2-.4-2.800-1.200-2.300-2.500z" fill="#101010" />
        </svg>
      </TaskItem>
      <TaskItem x="w-[39px]" line="left-[2px] w-[35px]"><svg viewBox="0 0 18 18" className="mr-px size-[18px]"><path d="M0 1h7l2 2h9v4H0z" fill="#d99a12" /><path d="M0 4.500h18V17H0z" fill="#fbd262" /><path d="M3 10h12v8h-3.500v-4h-5v4H3z" fill="#3d95dd" /></svg></TaskItem>
      <TaskItem x="w-[52px]"><svg viewBox="0 0 20 20" className="size-5"><path d="M6 5V.8h8V5" fill="none" stroke="#fff" strokeWidth="1.400" /><path d="M.5 5h19v13q0 1.500-1.500 1.500H2Q.5 19.500.5 18z" fill="#f4f4f4" /><path d="M6.500 8.500h3.200v3.200H6.500z" fill="#f25022" /><path d="M10.500 8.500h3.200v3.200h-3.200z" fill="#7fba00" /><path d="M6.500 12.500h3.200v3.200H6.500z" fill="#00a4ef" /><path d="M10.500 12.500h3.200v3.200h-3.200z" fill="#ffb900" /></svg></TaskItem>
      <TaskItem x="w-10" line="left-[3px] w-[35px]"><svg viewBox="0 0 20 20" className="size-5"><path d="M0 6l10-6 10 6v13H0z" fill="#1064b0" /><path d="M2 6h16v6H2z" fill="#fff" /><path d="M0 6l10 7 10-7v13H0z" fill="#29a3ea" /><path d="M0 19l10-6 10-7v13z" fill="#45bdf5" /></svg></TaskItem>
      <TaskItem x="w-[52px]"><svg viewBox="0 0 16 20" className="h-5 w-4"><path d="M0 5l10-5 6 2.500v15L10 20 3 16l7 1V4L4 6v9l-4 1.500z" fill="#e8380d" /><path d="M0 5l10-5v4L4 6v9l-4 1.500z" fill="#c4162a" /></svg></TaskItem>
      <TaskItem x="w-11"><svg viewBox="0 0 20 20" className="mr-1 size-5"><path d="M5 1h15v18H5z" fill="#2b7cd3" /><path d="M5 1h15v4.500H5z" fill="#41a5ee" /><path d="M5 14h15v5H5z" fill="#103f91" /><path d="M0 5h10.500v10.500H0z" fill="#185abd" /><path d="M2 7.500l1.500 5.500L5.200 8 7 13l1.500-5.500" fill="none" stroke="#fff" strokeWidth="1.300" /></svg></TaskItem>
      <div className="flex h-full w-[45px] shrink-0 flex-col items-center justify-end border-r-4 border-[#222] bg-[#333]">
        <svg viewBox="0 0 14 20" className="mb-1.5 ml-0.5 h-5 w-3.5"><path d="M.5 0H13l-.8 5H8L7 7.500l5 .8-.8 4H7L8 15l4.200.5L13.500 20H.5Q3 10 .5 0z" fill="#c4782d" /><path d="M.5 0Q6 8 2.500 20h-2Q3 10 .5 0z" fill="#8f4f16" /><path d="M1 0h12l-.3 2L3 1.500z" fill="#e39a4d" /></svg>
        <div className="-mr-1 h-[3px] w-[45px] bg-[#ff9a75]" />
      </div>
      <TaskItem x="w-[46px]" line="left-[6px] w-[35px]"><svg viewBox="0 0 20 20" className="size-5"><path d="M9 5c5-1 9 2 9 7s-4 7-9 7-9-2-9-6 4-7 9-8z" fill="#c9dfee" /><circle cx="5" cy="9" r="1.500" fill="#e2553d" /><circle cx="10" cy="8" r="1.400" fill="#f2c230" /><circle cx="4" cy="13" r="1.500" fill="#4caf50" /><circle cx="8" cy="15.500" r="1.500" fill="#2d7dd2" /><path d="M18.500 0L13 17" stroke="#e0a060" strokeWidth="2.600" /></svg></TaskItem>
      <svg viewBox="0 0 18 10" className="ml-auto h-2.5 w-[17px]" fill="none"><path d="M1 9l8-8 8 8" stroke="#fff" strokeWidth="1.400" /></svg>
      <svg viewBox="0 0 15 19" className="ml-[15px] h-[19px] w-[15px]" fill="none" stroke="#fff" strokeWidth="1.300"><path d="M1 5.500h9v8.500H1zM10.500 9L13.500 6.500v6.500L10.500 10.500M2 2.500q3.500-3 7 0M2 17q3.500 3 7 0" /></svg>
      <svg viewBox="0 0 20 13" className="ml-3 h-[13px] w-5"><path d="M4 13a4 4 0 0 1 0-8 5.500 5.500 0 0 1 10-1 4.500 4.500 0 0 1 2 9z" fill="#e8e8e8" /><path d="M4.500 5A5.500 5.500 0 0 1 14 4l-5 3z" fill="#999" /></svg>
      <svg viewBox="0 0 20 18" className="ml-2.5 h-[18px] w-5" fill="none" stroke="#fff" strokeWidth="1.200"><path d="M.6 6h3L8 2v14l-4.400-4h-3zM10.500 6.500q1.500 2.500 0 5M13 4.500q3 4.500 0 9" /><path d="M16 2q4.500 7 0 14" stroke="#777" /></svg>
      <svg viewBox="0 0 20 14" className="ml-[9px] h-3.5 w-5" fill="none" stroke="#fff" strokeWidth="1.200"><path d="M5.500 3.500h12.500v9H4.500V8M18 6h1.500v4H18" /><path d="M6 5h10.500v6H6z" fill="#fff" stroke="none" /><path d="M1 2v2.500h3.500V2M1.700 0v2M3.800 0v2M2.700 4.500V8" /></svg>
      <svg viewBox="0 0 17 16" className="ml-[13px] h-4 w-[17px]" fill="none" stroke="#fff" strokeWidth="1.200"><path d="M1 15Q1.500 2 16 1" stroke="#aaa" /><path d="M4.500 15.500Q5 6 16 5M8.500 15.500Q9 10 16 9" /><circle cx="13.800" cy="13.800" r="1.600" fill="#fff" stroke="none" /></svg>
      <T w={29} className="ml-[13px] text-[14px]">ENG</T>
      <T w={54} className="ml-5 text-[14px]">1:15 AM</T>
      <svg viewBox="0 0 20 20" className="ml-[27px] size-5"><path d="M0 .5h20v16h-7l-3 3.500-3-3.500H0z" fill="#fff" /><path d="M4 5h12M4 8.500h12M4 12h7" stroke="#101010" strokeWidth="1.300" /></svg>
      <div className="mr-1 ml-[26px] h-full w-px bg-[#666]" />
    </div>
  );
}

const menus: [string, number, string][] = [
  ["File", 18, "w-7"], ["Edit", 23, "w-[33px]"], ["Draw", 32, "w-[42px]"], ["View", 27, "w-[37px]"], ["Tools", 32, "w-[42px]"],
  ["Library", 42, "w-[52px]"], ["Options", 47, "w-[57px]"], ["Window", 50, "w-[60px]"], ["Help", 26, "w-10"],
];

export default function App() {
  return (
    <div className="flex h-[1080px] w-[1920px] flex-col overflow-hidden bg-[#eee] font-['DejaVu_Sans_Condensed','DejaVu_Sans',sans-serif] text-[#333] [font-stretch:condensed]">
      <div className="flex h-[29px] shrink-0 items-center bg-white pl-[3px] font-['Noto_Sans'] text-black">
        <svg viewBox="0 0 19 20" className="h-5 w-[19px]"><path d="M2 10h14v6l-4 4H2z" fill="#ddd" stroke="#888" strokeWidth=".8" /><path d="M11.500 20v-4.500H16z" fill="#555" /><path d="M0 2l2-2h15l1.500 2v9H0z" fill="#cc2127" /><text x="1.500" y="9.300" fontFamily="Open Sans" fontWeight="700" fontSize="9" fill="#fff" textLength="15.500" lengthAdjust="spacingAndGlyphs">SCH</text></svg>
        <T w={828} className="ml-[5px] text-[15px] leading-none">{"1 Schematic - C:\\Users\\Amorn\\OneDrive\\Documents\\EAGLE\\projects\\New_Project_2\\untitled.sch - EAGLE 9.6.2 free [OFFLINE]"}</T>
        <svg viewBox="0 0 12 12" className="ml-auto size-3"><path d="M0 5.500h12" stroke="#000" /></svg>
        <svg viewBox="0 0 12 12" className="ml-[46px] size-3" fill="none" stroke="#000"><path d="M.5 2.500h9v9h-9zM2.500 2.500v-2h9v9h-2" /></svg>
        <svg viewBox="0 0 12 12" className="mr-[26px] ml-[47px] size-3"><path d="M0 0l12 12M12 0L0 12" stroke="#000" strokeWidth="1.100" /></svg>
      </div>
      <div className="flex h-9 shrink-0 items-center border-b border-[#b6b6b6] bg-[#ccc] pl-[5px] font-['Noto_Sans'] text-[14px] text-[#3c3c3c]">
        {menus.map(([m, w, cls]) => <div key={m} className={cls}><T w={w}>{m}</T></div>)}
      </div>
      <MainToolbar />
      <LayerToolbar />
      <div className="flex h-[872px] shrink-0">
        <Palette />
        <DesignManager />
        <Workspace />
      </div>
      <div className="flex h-[25px] shrink-0 items-center border-t border-[#7f7f7f] bg-[#eee] pl-1.5">
        <T w={436} className="pt-0.5 text-[12px]">{"Left-click & drag to define group (or left-click to start defining a group polygon)"}</T>
        <div className="mr-1 ml-auto h-5 w-px bg-[#ccc]" />
        <svg viewBox="0 0 20 20" className="size-5"><path d="M15 0L0 10.500l8 2L5.500 20 20 9.500l-7.500-2z" fill="#1fb14c" /></svg>
        <div className="mr-1 ml-px h-5 w-px bg-[#ccc]" />
        <svg viewBox="0 0 20 20" className="mr-px size-5"><circle cx="10" cy="10" r="10" fill="#5f5f5f" /><path d="M10 3.500v9M10 14.500v2.500" stroke="#fff" strokeWidth="2.400" /></svg>
      </div>
      <Taskbar />
    </div>
  );
}
